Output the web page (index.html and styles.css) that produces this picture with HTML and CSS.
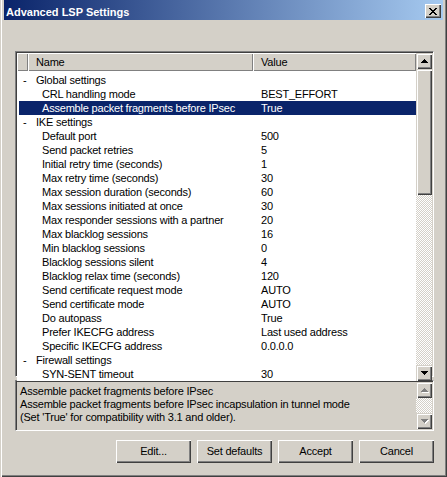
FILE: index.html
```html
<!DOCTYPE html>
<html>
<head>
    <meta charset="utf-8">
    <link rel="stylesheet" href="styles.css">
</head>
<body>
    <div class="window">
        <!-- Title bar -->
        <div class="titlebar">
            <span class="title">Advanced LSP Settings</span>
            <div class="close-btn">
                <svg width="8" height="7" shape-rendering="crispEdges">
                    <rect x="0" y="0" width="2" height="1"/><rect x="6" y="0" width="2" height="1"/>
                    <rect x="1" y="1" width="2" height="1"/><rect x="5" y="1" width="2" height="1"/>
                    <rect x="2" y="2" width="4" height="1"/>
                    <rect x="3" y="3" width="2" height="1"/>
                    <rect x="2" y="4" width="4" height="1"/>
                    <rect x="1" y="5" width="2" height="1"/><rect x="5" y="5" width="2" height="1"/>
                    <rect x="0" y="6" width="2" height="1"/><rect x="6" y="6" width="2" height="1"/>
                </svg>
            </div>
        </div>

        <div class="content">
            <!-- Settings list -->
            <div class="listbox">
                <div class="list-main">
                    <div class="list-header">
                        <div class="hcell hcell-exp"></div>
                        <div class="hcell hcell-name">Name</div>
                        <div class="hcell hcell-value">Value</div>
                    </div>
                    <div class="list-body">
                        <div class="row group"><span class="exp">-</span><span class="name">Global settings</span><span class="value"></span></div>
                        <div class="row"><span class="exp"></span><span class="name">CRL handling mode</span><span class="value">BEST_EFFORT</span></div>
                        <div class="row selected"><span class="exp"></span><span class="name">Assemble packet fragments before IPsec</span><span class="value">True</span></div>
                        <div class="row group"><span class="exp">-</span><span class="name">IKE settings</span><span class="value"></span></div>
                        <div class="row"><span class="exp"></span><span class="name">Default port</span><span class="value">500</span></div>
                        <div class="row"><span class="exp"></span><span class="name">Send packet retries</span><span class="value">5</span></div>
                        <div class="row"><span class="exp"></span><span class="name">Initial retry time (seconds)</span><span class="value">1</span></div>
                        <div class="row"><span class="exp"></span><span class="name">Max retry time (seconds)</span><span class="value">30</span></div>
                        <div class="row"><span class="exp"></span><span class="name">Max session duration (seconds)</span><span class="value">60</span></div>
                        <div class="row"><span class="exp"></span><span class="name">Max sessions initiated at once</span><span class="value">30</span></div>
                        <div class="row"><span class="exp"></span><span class="name">Max responder sessions with a partner</span><span class="value">20</span></div>
                        <div class="row"><span class="exp"></span><span class="name">Max blacklog sessions</span><span class="value">16</span></div>
                        <div class="row"><span class="exp"></span><span class="name">Min blacklog sessions</span><span class="value">0</span></div>
                        <div class="row"><span class="exp"></span><span class="name">Blacklog sessions silent</span><span class="value">4</span></div>
                        <div class="row"><span class="exp"></span><span class="name">Blacklog relax time (seconds)</span><span class="value">120</span></div>
                        <div class="row"><span class="exp"></span><span class="name">Send certificate request mode</span><span class="value">AUTO</span></div>
                        <div class="row"><span class="exp"></span><span class="name">Send certificate mode</span><span class="value">AUTO</span></div>
                        <div class="row"><span class="exp"></span><span class="name">Do autopass</span><span class="value">True</span></div>
                        <div class="row"><span class="exp"></span><span class="name">Prefer IKECFG address</span><span class="value">Last used address</span></div>
                        <div class="row"><span class="exp"></span><span class="name">Specific IKECFG address</span><span class="value">0.0.0.0</span></div>
                        <div class="row group"><span class="exp">-</span><span class="name">Firewall settings</span><span class="value"></span></div>
                        <div class="row"><span class="exp"></span><span class="name">SYN-SENT timeout</span><span class="value">30</span></div>
                    </div>
                </div>
                <div class="scrollbar">
                    <div class="sb-btn">
                        <svg width="7" height="4" shape-rendering="crispEdges"><path d="M3 0h1v1h1v1h1v1h1v1H0V3h1V2h1V1h1z"/></svg>
                    </div>
                    <div class="sb-thumb list-thumb"></div>
                    <div class="sb-track"></div>
                    <div class="sb-btn">
                        <svg width="7" height="4" shape-rendering="crispEdges"><path d="M0 0h7v1H6v1H5v1H4v1H3V3H2V2H1V1H0z"/></svg>
                    </div>
                </div>
            </div>

            <!-- Description of the selected setting -->
            <div class="descbox">
                <div class="desc-text">
                    Assemble packet fragments before IPsec<br>
                    Assemble packet fragments before IPsec incapsulation in tunnel mode<br>
                    (Set 'True' for compatibility with 3.1 and older).
                </div>
                <div class="scrollbar">
                    <div class="sb-btn disabled">
                        <svg width="8" height="5" shape-rendering="crispEdges">
                            <path class="shade" transform="translate(1,1)" d="M3 0h1v1h1v1h1v1h1v1H0V3h1V2h1V1h1z"/>
                            <path d="M3 0h1v1h1v1h1v1h1v1H0V3h1V2h1V1h1z"/>
                        </svg>
                    </div>
                    <div class="sb-track"></div>
                    <div class="sb-btn disabled">
                        <svg width="8" height="5" shape-rendering="crispEdges">
                            <path class="shade" transform="translate(1,1)" d="M0 0h7v1H6v1H5v1H4v1H3V3H2V2H1V1H0z"/>
                            <path d="M0 0h7v1H6v1H5v1H4v1H3V3H2V2H1V1H0z"/>
                        </svg>
                    </div>
                </div>
            </div>

            <!-- Dialog buttons -->
            <div class="buttons">
                <div class="btn">Edit...</div>
                <div class="btn">Set defaults</div>
                <div class="btn">Accept</div>
                <div class="btn">Cancel</div>
            </div>
        </div>
    </div>
</body>
</html>
```

FILE: styles.css
```css
/* Classic grey dialog look */
body {
    margin: 0;
    background: #d4d0c8;
    font-family: "Liberation Sans", Arial, sans-serif;
    font-size: 11px;
    letter-spacing: -0.2px;
    color: #000;
}

.window {
    width: 447px;
    height: 477px;
    box-sizing: border-box;
    padding: 0 4px 4px 4px;
    background: #d4d0c8;
    box-shadow: inset 1px 0 #d4d0c8, inset 2px 0 #fff, inset -1px -1px #404040, inset -2px -2px #808080;
}

/* Title bar */
.titlebar {
    height: 20px;
    display: flex;
    justify-content: space-between;
    background: linear-gradient(to right, #0a246a, #a6caf0);
}

.title {
    color: #fff;
    font-weight: bold;
    letter-spacing: 0;
    line-height: 20px;
    padding: 2px 0 0 2px;
}

.close-btn {
    width: 16px;
    height: 14px;
    margin: 4px 2px 0 0;
    background: #d4d0c8;
    box-shadow: inset 1px 1px #fff, inset -1px -1px #404040, inset -2px -2px #808080;
    display: flex;
    align-items: center;
    justify-content: center;
}

.close-btn svg {
    margin-left: -1px;
}

.content {
    padding: 31px 9px 0 11px;
}

/* Sunken boxes */
.listbox, .descbox {
    box-sizing: border-box;
    border: 2px solid;
    border-color: #808080 #fff #fff #808080;
    box-shadow: inset 1px 1px #404040, inset -1px -1px #d4d0c8;
    display: grid;
    grid-template-columns: 1fr 16px;
}

.listbox {
    height: 326px;
    padding: 1px 1px 1px 1px;
    border-width: 1px;
}

.list-main {
    display: flex;
    flex-direction: column;
    min-width: 0;
}

/* Column headers */
.list-header {
    display: flex;
    height: 18px;
    line-height: 18px;
}

.hcell {
    box-sizing: border-box;
    background: #d4d0c8;
    box-shadow: inset 1px 1px #fff, inset -1px -1px #808080;
    padding-left: 8px;
}

.hcell-exp {
    width: 11px;
}

.hcell-name {
    width: 225px;
}

.hcell-value {
    flex: 1;
}

.list-body {
    flex: 1;
    background: #fff;
    padding-top: 2px;
    overflow: hidden;
}

.row {
    display: grid;
    grid-template-columns: 9px 225px 1fr;
    margin-left: 2px;
    height: 14px;
    line-height: 14px;
    white-space: nowrap;
}

.row .exp {
    padding-left: 4px;
}

.row .name {
    padding-left: 14px;
}

.row.group .name {
    padding-left: 8px;
}

.row .value {
    padding-left: 8px;
}

.row.selected {
    background: #0a246a;
    color: #fff;
}

/* Scroll bars */
.scrollbar {
    display: flex;
    flex-direction: column;
}

.sb-btn, .sb-thumb {
    background: #d4d0c8;
    box-shadow: inset 1px 1px #d4d0c8, inset 2px 2px #fff, inset -1px -1px #404040, inset -2px -2px #808080;
}

.sb-btn {
    height: 16px;
    flex: none;
    display: flex;
    align-items: center;
    justify-content: center;
}

.sb-btn.disabled svg {
    fill: #808080;
    margin-left: 1px;
}

.sb-btn.disabled .shade {
    fill: #fff;
}

.list-thumb {
    height: 126px;
    flex: none;
}

.sb-track {
    flex: 1;
    background: repeating-conic-gradient(#fff 0 25%, #d4d0c8 0 50%) 0 0 / 2px 2px;
}

/* Description area */
.descbox {
    height: 51px;
    margin-top: 3px;
    padding: 0;
    border-width: 1px;
    padding: 1px;
}

.desc-text {
    padding: 3px 0 0 3px;
    line-height: 13px;
    white-space: nowrap;
    overflow: hidden;
}

/* Bottom buttons */
.buttons {
    display: flex;
    justify-content: flex-end;
    gap: 6px;
    margin-top: 9px;
}

.btn {
    width: 75px;
    height: 23px;
    line-height: 23px;
    text-align: center;
    background: #d4d0c8;
    box-shadow: inset 1px 1px #fff, inset -1px -1px #404040, inset -2px -2px #808080;
}
```
